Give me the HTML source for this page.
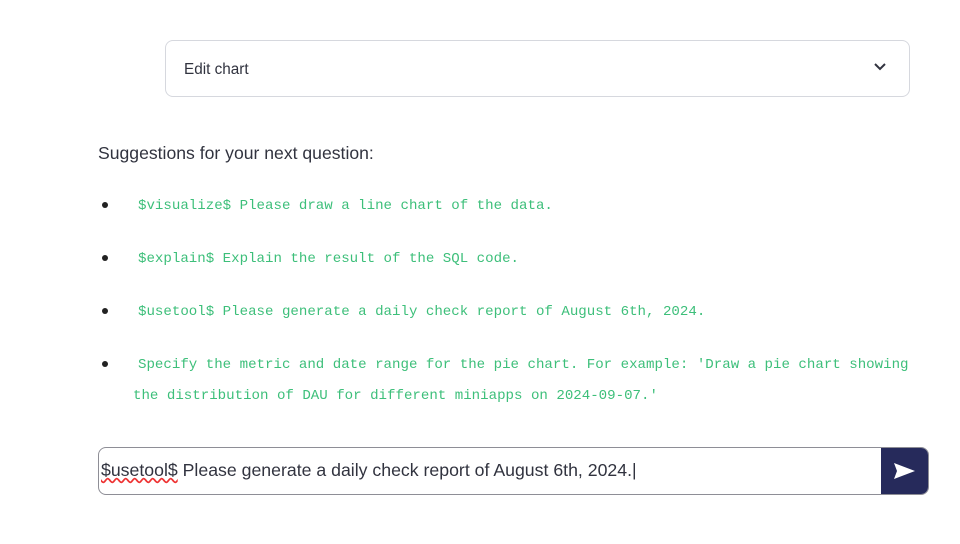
<!DOCTYPE html>
<html><head><style>
body{margin:0;width:960px;height:544px;background:#fff;font-family:"Liberation Sans",sans-serif;position:relative;overflow:hidden}
.exp{position:absolute;left:165px;top:40px;width:745px;height:57px;border:1px solid #d6d8de;border-radius:8px;box-sizing:border-box}
.exp span{position:absolute;left:18px;top:20px;font-size:15.3px;color:#31333f}
.exp svg{position:absolute;right:22px;top:21px}
.sug{position:absolute;left:98px;top:143px;font-size:17.6px;color:#31333f}
.li{position:absolute;font-family:"Liberation Mono",monospace;font-size:14.12px;color:#3dbf7a}
.dot{position:absolute;width:6px;height:6px;border-radius:50%;background:#222}
.inp{position:absolute;left:98px;top:447px;width:831px;height:48px;border:1px solid #8e8e96;border-radius:8px;box-sizing:border-box;overflow:hidden}
.inp .t{position:absolute;left:2px;top:12px;font-size:17.7px;color:#31333f;white-space:nowrap}
.btn{position:absolute;right:0;top:0;width:47px;height:46px;background:#262a5b}
</style></head><body>
<div class="exp"><span>Edit chart</span><svg width="14" height="10" viewBox="0 0 14 10"><path d="M2 2 L7 7 L12 2" stroke="#31333f" stroke-width="2" fill="none"/></svg></div>
<div class="sug">Suggestions for your next question:</div>
<div class="dot" style="left:102px;top:202px"></div>
<div class="li" style="left:138px;top:198px">$visualize$ Please draw a line chart of the data.</div>
<div class="dot" style="left:102px;top:255px"></div>
<div class="li" style="left:138px;top:251px">$explain$ Explain the result of the SQL code.</div>
<div class="dot" style="left:102px;top:308px"></div>
<div class="li" style="left:138px;top:304px">$usetool$ Please generate a daily check report of August 6th, 2024.</div>
<div class="dot" style="left:102px;top:361px"></div>
<div class="li" style="left:138px;top:357px">Specify the metric and date range for the pie chart. For example: 'Draw a pie chart showing</div>
<div class="li" style="left:133px;top:388px">the distribution of DAU for different miniapps on 2024-09-07.'</div>
<div class="inp"><span class="t"><span style="text-decoration:underline wavy #e33">$usetool$</span> Please generate a daily check report of August 6th, 2024.|</span>
<div class="btn"><svg width="47" height="46" viewBox="0 0 47 46"><path d="M13 15 L34 23 L13 31 L16 23 Z" fill="#fff"/></svg></div></div>
</body></html>
